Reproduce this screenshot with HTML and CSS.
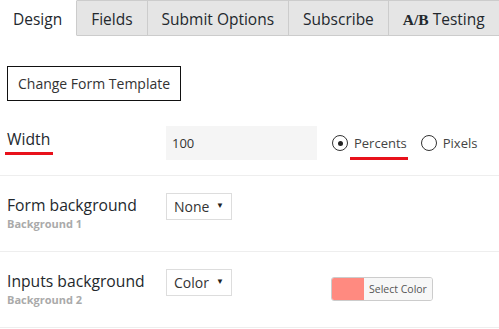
FILE: index.html
```html
<!DOCTYPE html>
<html lang="en">
<head>
  <meta charset="UTF-8" />
  <title>Form Design</title>
  <link rel="stylesheet" href="styles.css">
</head>
<body>

  <div class="tabs">
    <a class="tab active">Design</a>
    <a class="tab">Fields</a>
    <a class="tab">Submit Options</a>
    <a class="tab">Subscribe</a>
    <a class="tab"><b class="ab">A/B</b> Testing</a>
  </div>

  <div class="panel">
    <button class="btn-outline">Change Form Template</button>

    <div class="opts">
      <div class="row first">
        <div class="label"><span class="mark">Width</span></div>
        <div class="field">
          <input type="text" class="txt" value="100" />
          <label class="radio"><span class="circle on"></span><span class="mark">Percents</span></label>
          <label class="radio"><span class="circle"></span>Pixels</label>
        </div>
      </div>

      <div class="row">
        <div class="label">Form background<small>Background 1</small></div>
        <div class="field">
          <div class="sel">None <span class="arr">&#9660;</span></div>
        </div>
      </div>

      <div class="row">
        <div class="label">Inputs background<small>Background 2</small></div>
        <div class="field">
          <div class="sel">Color <span class="arr">&#9660;</span></div>
          <div class="picker"><span class="swatch"></span><span class="pick-btn">Select Color</span></div>
        </div>
      </div>
    </div>
  </div>

</body>
</html>
```

FILE: styles.css
```css
* { margin:0; padding:0; box-sizing:border-box; font-family:"Open Sans","Noto Sans",sans-serif; }
body { background:#fff; color:#23282d; width:499px; overflow:hidden; }

.tabs { display:flex; height:37px; border-bottom:1px solid #fff; }
.tab { display:block; padding:0 14px 0 14px; line-height:36px; font-size:15.5px; color:#23282d; background:#e5e5e5; border:1px solid #ccc; border-left:none; white-space:nowrap; }
.tab.active { padding-left:13px; background:#fff; border-color:#fff; border-right:1px solid #ccc; }
.tab:last-child { flex:1; border-right:none; }
.ab { font-family:"Liberation Serif",serif; font-weight:bold; font-size:15.5px; }

.panel { padding:29px 0 0; }
.btn-outline { margin-left:7px; height:35px; padding:0 10px; border:1px solid #111; background:#fff; font-size:14px; color:#333; }

.opts { margin-top:10px; }
.row { display:grid; grid-template-columns:166px 1fr; align-items:start; height:76px; padding-top:17px; border-bottom:1px solid #eee; }
.row.first { height:65px; padding-top:15px; }
.label { padding-left:7px; margin-top:2px; font-size:15.7px; color:#23282d; line-height:21px; }
.first .label { margin-top:3px; }
.label small { display:block; font-size:11px; font-weight:bold; color:#aaa; line-height:15px; }
.mark { position:relative; display:inline-block; }
.mark::after { content:""; position:absolute; left:-2px; right:-3px; bottom:-5px; height:3px; background:#e8111b; }

.field { display:flex; align-items:flex-start; }
.first .field { align-items:center; }
.txt { width:151px; height:34px; border:none; background:#f5f5f5; padding-left:6px; font-size:13px; color:#333; margin-right:15px; }
.radio { display:flex; align-items:center; gap:6px; font-size:13px; color:#444; margin-right:14px; }
.radio .mark::after { left:-4px; right:-1px; bottom:-8px; }
.circle { width:16px; height:16px; border:1px solid #333; border-radius:50%; display:flex; align-items:center; justify-content:center; }
.circle.on::before { content:""; width:5px; height:5px; border-radius:50%; background:#222; }

.sel { width:66px; height:27px; border:1px solid #ddd; display:flex; align-items:center; justify-content:space-between; padding:0 7px; font-size:14px; color:#333; }
.arr { font-size:8px; color:#222; margin-top:-4px; }
.picker { display:flex; margin-left:99px; margin-top:8px; height:24px; border:1px solid #ccc; border-radius:3px; overflow:hidden; }
.swatch { width:32px; background:#ff8a80; }
.pick-btn { padding:0 5px; font-size:10.5px; line-height:22px; background:#f7f7f7; color:#555; }
```
